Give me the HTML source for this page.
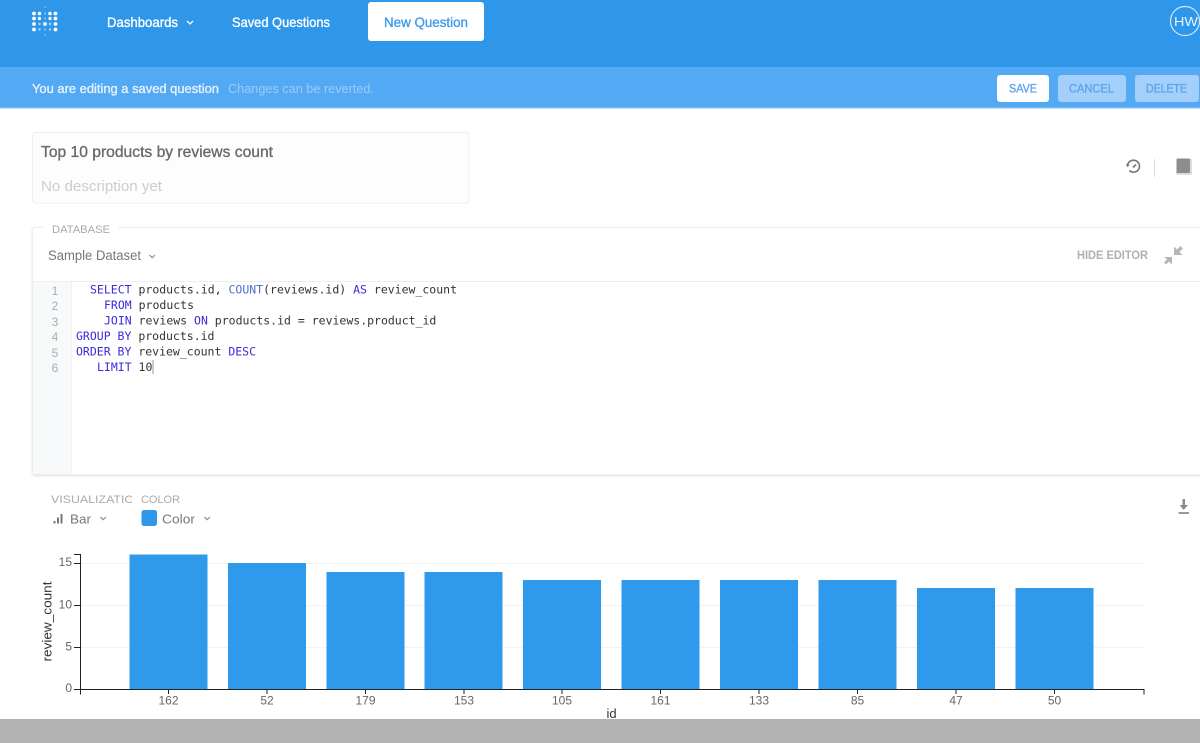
<!DOCTYPE html>
<html>
<head>
<meta charset="utf-8">
<style>
html,body{margin:0;padding:0;width:1200px;height:743px;overflow:hidden;background:#fff}
svg{display:block;filter:blur(.35px)}
text{font-family:"Liberation Sans",sans-serif}
.h{stroke-width:.35px}
.m{font-family:"DejaVu Sans Mono",monospace;font-size:11.5px;fill:#333}
.k{fill:#3c2bd8}
.f{fill:#4a72c8}
.n{font-family:"Liberation Sans",sans-serif;font-size:12px;fill:#aaa;text-anchor:middle}
.ax{font-size:12px;fill:#666;text-anchor:middle}
.ay{font-size:12px;fill:#666;text-anchor:end}
</style>
</head>
<body>
<svg width="1200" height="743" viewBox="0 0 1200 743" xmlns="http://www.w3.org/2000/svg">
<defs>
<clipPath id="vc"><rect x="40" y="490" width="92" height="20"/></clipPath>
<filter id="sh" x="-2%" y="-5%" width="104%" height="110%"><feDropShadow dx="0" dy="1" stdDeviation="1.2" flood-color="#000" flood-opacity=".12"/></filter>
</defs>
<rect width="1200" height="743" fill="#fff"/>

<!-- nav -->
<rect width="1200" height="67" fill="#2f97e9"/>
<g fill="#fff">
<circle cx="34" cy="13.5" r="1.9"/><circle cx="34" cy="18.5" r="1.9"/><circle cx="34" cy="24" r="1.9"/><circle cx="34" cy="29.5" r="1.9"/>
<circle cx="39.5" cy="13.5" r="1.8"/><circle cx="39.5" cy="24" r="1.2" opacity=".6"/><circle cx="39.5" cy="18.5" r="1.6"/><circle cx="39.5" cy="29.5" r="1.2" opacity=".6"/>
<circle cx="45" cy="24" r="1.9"/><circle cx="45" cy="13.5" r="1.1" opacity=".4"/><circle cx="45" cy="18.5" r="1.1" opacity=".4"/><circle cx="45" cy="29.5" r="1.1" opacity=".4"/><circle cx="45" cy="7" r="1" opacity=".3"/><circle cx="45" cy="35" r="1" opacity=".3"/>
<circle cx="50" cy="13.5" r="1.8"/><circle cx="50" cy="18.5" r="1.6"/><circle cx="50" cy="24" r="1.2" opacity=".6"/><circle cx="50" cy="29.5" r="1.2" opacity=".6"/>
<circle cx="55.5" cy="13.5" r="1.9"/><circle cx="55.5" cy="18.5" r="1.9"/><circle cx="55.5" cy="24" r="1.9"/><circle cx="55.5" cy="29.5" r="1.9"/>
</g>
<text class="h" stroke="#fff" x="107" y="27" font-size="14" fill="#fff" textLength="71" lengthAdjust="spacingAndGlyphs">Dashboards</text>
<path d="M187 21l3 3 3-3" fill="none" stroke="#fff" stroke-width="1.300"/>
<text class="h" stroke="#fff" x="232" y="27" font-size="14" fill="#fff" textLength="98" lengthAdjust="spacingAndGlyphs">Saved Questions</text>
<rect x="368" y="2" width="116" height="39" rx="3" fill="#fff"/>
<text class="h" stroke="#3f9bec" x="384" y="27" font-size="14" fill="#3f9bec" textLength="84" lengthAdjust="spacingAndGlyphs">New Question</text>
<circle cx="1185" cy="21" r="14.5" fill="none" stroke="#cfe6fb" stroke-width="1.200"/>
<text x="1174" y="26" font-size="13" fill="#e8f3fd" textLength="24" lengthAdjust="spacingAndGlyphs">HW</text>

<!-- edit bar -->
<rect y="67" width="1200" height="41" fill="#53a9f4"/>
<rect y="107" width="1200" height="1.500" fill="#79bcf7"/>
<text class="h" stroke="#e6f2fd" x="32" y="93" font-size="13" fill="#e6f2fd" textLength="187" lengthAdjust="spacingAndGlyphs">You are editing a saved question</text>
<text x="228" y="93" font-size="13" fill="#9ccbf7" textLength="146" lengthAdjust="spacingAndGlyphs">Changes can be reverted.</text>
<rect x="997" y="75" width="52" height="27" rx="3" fill="#fff"/>
<text class="h" stroke="#5aa6ee" x="1009" y="92.500" font-size="11.500" fill="#5aa6ee" textLength="28" lengthAdjust="spacingAndGlyphs">SAVE</text>
<rect x="1058" y="75" width="68" height="27" rx="3" fill="#a3cffa"/>
<text class="h" stroke="#5aa6ee" x="1069" y="92.500" font-size="11.500" fill="#5aa6ee" textLength="45" lengthAdjust="spacingAndGlyphs">CANCEL</text>
<rect x="1135" y="75" width="64" height="27" rx="3" fill="#a3cffa"/>
<text class="h" stroke="#5aa6ee" x="1146" y="92.500" font-size="11.500" fill="#5aa6ee" textLength="41" lengthAdjust="spacingAndGlyphs">DELETE</text>

<!-- title box -->
<rect x="32.500" y="132.500" width="436.500" height="70.500" rx="3" fill="#fdfdfd" stroke="#eeeeee"/>
<text class="h" stroke="#6a6a6a" x="41" y="157" font-size="16" fill="#6a6a6a" textLength="232" lengthAdjust="spacingAndGlyphs">Top 10 products by reviews count</text>
<text x="41" y="191" font-size="15" fill="#cccccc" textLength="121" lengthAdjust="spacingAndGlyphs">No description yet</text>

<!-- top right icons -->
<g transform="translate(0 1)">
<path d="M1127.500 164.500a6 6 0 1 1 1.800 5" fill="none" stroke="#777" stroke-width="1.600"/>
<path d="M1125.500 163.500l2 2.500 2.400-2.300z" fill="#777"/>
<path d="M1136 163.500l-3 3" stroke="#777" stroke-width="1.600" fill="none"/>
</g>
<rect x="1154" y="159" width="1" height="18" fill="#ddd"/>
<rect x="1176.500" y="158.500" width="13.500" height="14.500" rx="1" fill="#8d8d8d"/>
<path d="M1176.500 172.500q0 1.500 2 1.500h12.500v-15" fill="none" stroke="#bbb" stroke-width="1"/>

<!-- editor panel -->
<rect x="32.500" y="227.500" width="1170" height="247" rx="3" fill="#fff" stroke="#eeeeee" filter="url(#sh)"/>
<rect x="44" y="224" width="74" height="8" fill="#fff"/>
<text x="52" y="233" font-size="11" fill="#aaa" textLength="58" lengthAdjust="spacingAndGlyphs">DATABASE</text>
<text x="48" y="260" font-size="13.500" fill="#777" textLength="93" lengthAdjust="spacingAndGlyphs">Sample Dataset</text>
<path d="M149.500 255l2.700 2.700 2.700-2.700" fill="none" stroke="#888" stroke-width="1.100"/>
<text x="1077" y="259" font-size="11.500" font-weight="bold" fill="#b0b0b0" textLength="71" lengthAdjust="spacingAndGlyphs">HIDE EDITOR</text>
<path d="M1174 246.500v8.500h8.500l-3-3 3.500-3.500-2.500-2.500-3.500 3.500z" fill="#b5b5b5"/>
<path d="M1172 264.500v-7.500h-7.500l2.500 2.500-3 3 2 2 3-3z" fill="#b5b5b5"/>
<rect x="33" y="281" width="1167" height="1" fill="#eeeeee"/>
<rect x="33" y="282" width="39" height="192" fill="#f7f9fb"/>
<rect x="71" y="282" width="1" height="192" fill="#eef1f4"/>
<text class="n" x="55" y="295">1</text>
<text class="n" x="55" y="310">2</text>
<text class="n" x="55" y="326">3</text>
<text class="n" x="55" y="341">4</text>
<text class="n" x="55" y="357">5</text>
<text class="n" x="55" y="372">6</text>

<text class="m" x="90" y="293.500" xml:space="preserve"><tspan class="k">SELECT</tspan> products.id, <tspan class="f">COUNT</tspan>(reviews.id) <tspan class="k">AS</tspan> review_count</text>
<text class="m" x="104" y="309" xml:space="preserve"><tspan class="k">FROM</tspan> products</text>
<text class="m" x="104" y="324.500" xml:space="preserve"><tspan class="k">JOIN</tspan> reviews <tspan class="k">ON</tspan> products.id = reviews.product_id</text>
<text class="m" x="76" y="340" xml:space="preserve"><tspan class="k">GROUP BY</tspan> products.id</text>
<text class="m" x="76" y="355.500" xml:space="preserve"><tspan class="k">ORDER BY</tspan> review_count <tspan class="k">DESC</tspan></text>
<text class="m" x="97" y="371" xml:space="preserve"><tspan class="k">LIMIT</tspan> 10</text>
<rect x="152.500" y="360" width="1" height="14" fill="#999"/>

<!-- viz controls -->
<text x="51" y="503" font-size="11" fill="#aaa" clip-path="url(#vc)" textLength="92" lengthAdjust="spacingAndGlyphs">VISUALIZATION</text>
<text x="141" y="503" font-size="11" fill="#aaa" textLength="39" lengthAdjust="spacingAndGlyphs">COLOR</text>
<rect x="53.500" y="521" width="2" height="2.500" fill="#777"/><rect x="57" y="517.500" width="2" height="6" fill="#777"/><rect x="60.500" y="514" width="2" height="9.500" fill="#777"/>
<text x="70" y="523.500" font-size="13" fill="#777" textLength="21" lengthAdjust="spacingAndGlyphs">Bar</text>
<path d="M100.500 517l2.700 2.700 2.700-2.700" fill="none" stroke="#888" stroke-width="1.100"/>
<rect x="141.500" y="510" width="15.500" height="16" rx="2.500" fill="#2f97e9"/>
<text x="162" y="523.500" font-size="13" fill="#777" textLength="33" lengthAdjust="spacingAndGlyphs">Color</text>
<path d="M204.500 517l2.700 2.700 2.700-2.700" fill="none" stroke="#888" stroke-width="1.100"/>
<path d="M1182.500 499h2.500v6h3l-4.300 5-4.200-5h3z" fill="#8a8a8a"/>
<rect x="1178.500" y="512" width="10.500" height="2" fill="#9a9a9a"/>

<!-- chart -->
<g fill="#f2f2f2">
<rect x="80" y="563" width="1064" height="1"/>
<rect x="80" y="605" width="1064" height="1"/>
<rect x="80" y="647" width="1064" height="1"/>
</g>
<g fill="#2f99eb">
<rect x="129.500" y="554.500" width="78" height="135"/>
<rect x="228" y="563" width="78" height="126"/>
<rect x="326.500" y="572" width="78" height="117"/>
<rect x="424.500" y="572" width="78" height="117"/>
<rect x="523" y="580" width="78" height="109"/>
<rect x="621.500" y="580" width="78" height="109"/>
<rect x="720" y="580" width="78" height="109"/>
<rect x="818.500" y="580" width="78" height="109"/>
<rect x="917" y="588" width="78" height="101"/>
<rect x="1015.500" y="588" width="78" height="101"/>
</g>
<g stroke="#222" stroke-width="1" fill="none">
<path d="M74 554.500h6.500v140"/>
<path d="M74 689.500h1070v5"/>
<path d="M74 563.500h6M74 605.500h6M74 647.500h6"/>
<path d="M168.500 689v5M267 689v5M365.500 689v5M464 689v5M562 689v5M660.500 689v5M759 689v5M857.500 689v5M956 689v5M1054.500 689v5"/>
</g>
<text class="ay" x="72" y="566">15</text>
<text class="ay" x="72" y="608.500">10</text>
<text class="ay" x="72" y="650.500">5</text>
<text class="ay" x="72" y="692">0</text>
<text class="ax" x="168.500" y="704.500">162</text>
<text class="ax" x="267" y="704.500">52</text>
<text class="ax" x="365.500" y="704.500">179</text>
<text class="ax" x="464" y="704.500">153</text>
<text class="ax" x="562" y="704.500">105</text>
<text class="ax" x="660.500" y="704.500">161</text>
<text class="ax" x="759" y="704.500">133</text>
<text class="ax" x="857.500" y="704.500">85</text>
<text class="ax" x="956" y="704.500">47</text>
<text class="ax" x="1054.500" y="704.500">50</text>
<text x="611.500" y="718" font-size="13" fill="#333" text-anchor="middle">id</text>
<text transform="translate(51.500 661.500) rotate(-90)" font-size="12.500" fill="#333" textLength="80" lengthAdjust="spacingAndGlyphs">review_count</text>

<rect y="719" width="1200" height="24" fill="#b2b2b2"/>
</svg>
</body>
</html>
